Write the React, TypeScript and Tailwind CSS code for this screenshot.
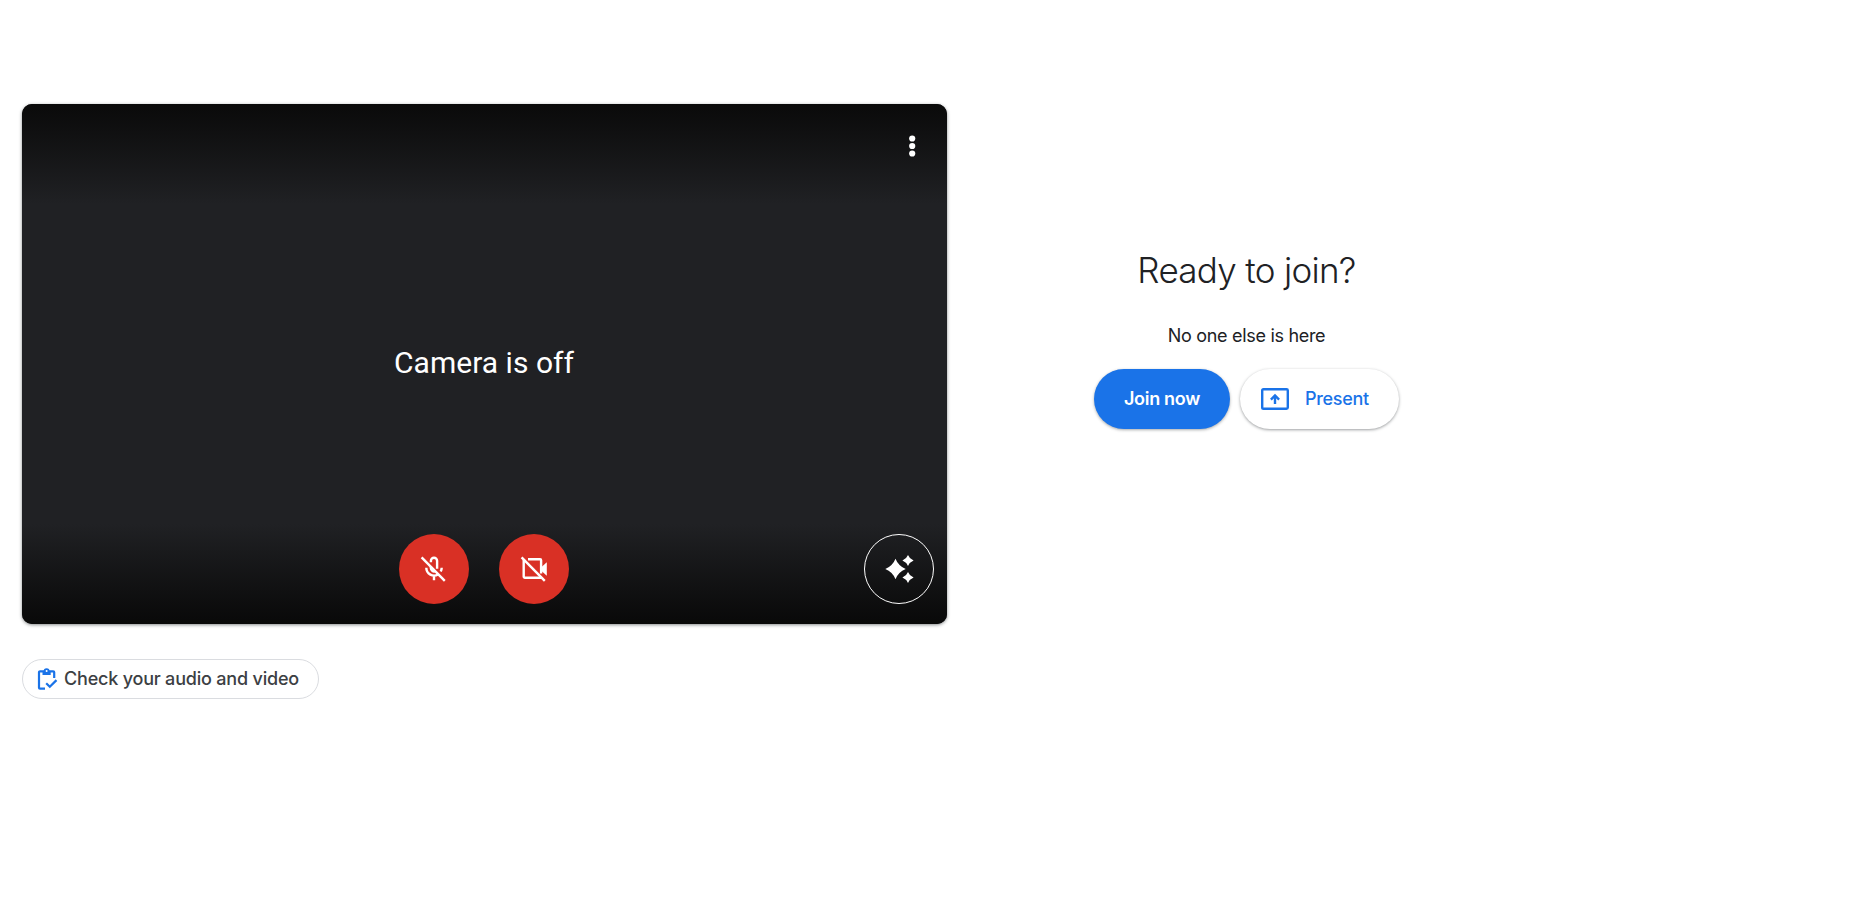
import React from "react";

function MicOffIcon() {
  return (
    <svg width="30" height="30" viewBox="0 0 30 30" fill="none" stroke="#fff" strokeWidth="2.4">
      <path d="M2.600 3.300l23.200 23.500" />
      <path d="M11.900 8.200V6.800a3.100 3.100 0 0 1 6.200 0v8" />
      <path d="M11.900 12.500v1.800a3.100 3.100 0 0 0 4.600 2.700" />
      <path d="M7.300 13.800a7.700 7.700 0 0 0 12 6.400M22.700 13.800a7.700 7.700 0 0 1-1 3.700M15 21.500V26.300" />
    </svg>
  );
}

function CameraOffIcon() {
  return (
    <svg width="30" height="30" viewBox="0 0 30 30" fill="none" stroke="#fff" strokeWidth="2.4">
      <path d="M2.600 3.300l23.200 23.500" />
      <path d="M4.700 5.500v17.100a1.200 1.200 0 0 0 1.200 1.200h16.300" />
      <path d="M9 5.300h12.100a1 1 0 0 1 1 1v13.200" />
      <path d="M22 13.500 27.800 8.300v13.400L22 16.500z" fill="#fff" stroke="none" />
    </svg>
  );
}

function SparklesIcon() {
  return (
    <svg width="30" height="30" viewBox="0 0 30 30" fill="#fff">
      <path d="M11.500 4.800q2.900 7.300 10.200 10.200-7.300 2.900-10.200 10.200Q8.600 17.900 1.300 15 8.600 12.100 11.500 4.800zM24 .900q1.600 4 5.600 5.600-4 1.600-5.600 5.600-1.600-4-5.600-5.600 4-1.600 5.600-5.600zM24 17.900q1.600 4 5.600 5.600-4 1.600-5.600 5.600-1.600-4-5.600-5.600 4-1.600 5.600-5.600z" />
    </svg>
  );
}

function ChecklistIcon() {
  return (
    <svg width="21" height="22" viewBox="0 0 21 22" fill="none" stroke="#1a73e8" strokeWidth="2.200">
      <path d="M8 20.700H3a1 1 0 0 1-1-1V4.300a1 1 0 0 1 1-1h13.200a1 1 0 0 1 1 1V10" />
      <path d="M9.200 15.200l3.600 3.600 6.700-6.700" />
      <path d="M5.500 3h8.200v4H5.500z" fill="#1a73e8" stroke="none" />
      <path d="M6.600 3.200a3 3 0 0 1 6 0z" fill="#1a73e8" stroke="none" />
      <circle cx="9.600" cy="3" r="1" fill="#fff" stroke="none" />
    </svg>
  );
}

function PresentIcon() {
  return (
    <svg width="28" height="22" viewBox="0 0 28 22" fill="none" stroke="#1a73e8" strokeWidth="2.400">
      <rect x="1.200" y="1.200" width="25.600" height="19.600" rx="1.300" />
      <path d="M14 16V8M9.900 11.600 14 7.500l4.100 4.100" />
    </svg>
  );
}

function CameraPreview() {
  return (
    <section className="flex h-[520px] w-[925px] flex-col overflow-hidden rounded-[10px] bg-[#202124] shadow-[0_1px_3px_rgba(60,64,67,0.45),0_1px_4px_rgba(60,64,67,0.2)]">
      <div className="flex h-[100px] justify-end bg-linear-to-b from-[#0a0a0a] to-[#202124] pt-[27px] pr-5">
        <button aria-label="More options" className="h-[30px] w-[30px]">
          <svg width="30" height="30" viewBox="0 0 30 30" fill="#fff">
            <circle cx="15.200" cy="7.500" r="3.100" />
            <circle cx="15.200" cy="15" r="3.100" />
            <circle cx="15.200" cy="22.500" r="3.100" />
          </svg>
        </button>
      </div>
      <div className="flex flex-1 items-center justify-center pr-px pb-0.5 font-[Roboto,sans-serif] text-[30px] leading-10 tracking-[0.03px] text-white">
        <span>Camera is off</span>
      </div>
      <div className="grid h-[100px] grid-cols-[1fr_auto_1fr] items-start bg-linear-to-b from-[#202124] to-[#090909] pt-2.5 pr-[13px] pl-3">
        <div />
        <div className="flex gap-[30px]">
          <button aria-label="Turn on microphone" className="flex h-[70px] w-[70px] items-center justify-center rounded-full bg-[#d93025]">
            <MicOffIcon />
          </button>
          <button aria-label="Turn on camera" className="flex h-[70px] w-[70px] items-center justify-center rounded-full bg-[#d93025]">
            <CameraOffIcon />
          </button>
        </div>
        <button aria-label="Apply visual effects" className="flex h-[70px] w-[70px] items-center justify-center justify-self-end rounded-full border border-white">
          <SparklesIcon />
        </button>
      </div>
    </section>
  );
}

export default function App() {
  return (
    <main className="flex h-[902px] bg-white pt-[104px] pl-[22px] font-[Inter,sans-serif]">
      <div>
        <CameraPreview />
        <button className="mt-[35px] flex h-10 w-[297px] items-center rounded-full border border-[#dadce0] pb-px pl-[14px] text-[18px] font-medium tracking-[-0.2px] text-[#3c4043]">
          <ChecklistIcon />
          <span className="ml-1.5 whitespace-nowrap">Check your audio and video</span>
        </button>
      </div>
      <div className="ml-[147px] flex w-[305px] flex-col items-center pt-[141px] text-[#202124]">
        <h1 className="text-[35px] leading-[50px] font-light tracking-[-0.7px] whitespace-nowrap">Ready to join?</h1>
        <p className="mt-[28px] text-[18px] leading-[25px] tracking-[-0.3px] whitespace-nowrap">No one else is here</p>
        <div className="mt-[21px] flex gap-2.5">
          <button className="h-[60px] w-[136px] rounded-full bg-[#1a73e8] pb-px text-[18px] font-semibold tracking-[-0.3px] text-white shadow-[0_1px_3px_rgba(60,64,67,0.45)]">
            Join now
          </button>
          <button className="flex h-[60px] w-[159px] items-center rounded-full bg-white pl-[21px] text-[18px] font-medium tracking-[-0.3px] text-[#1a73e8] shadow-[0_1px_3px_rgba(60,64,67,0.5)]">
            <PresentIcon />
            <span className="ml-4 pb-px">Present</span>
          </button>
        </div>
      </div>
    </main>
  );
}
